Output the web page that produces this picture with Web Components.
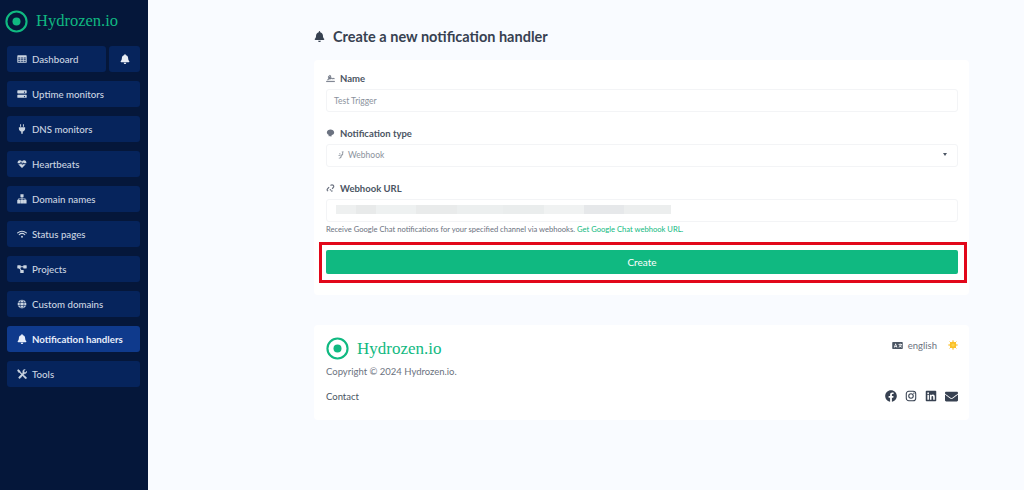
<!DOCTYPE html>
<html lang="en">
<head>
<meta charset="utf-8">
<title>Hydrozen.io</title>
<style>
    html, body { margin: 0; height: 100%; }
    body { font-family: Lato, "Noto Sans", sans-serif; background: #f9fbff; }
</style>
</head>
<body>
<hz-app>
    <hz-sidebar slot="sidebar">
        <hz-nav-row>
            <hz-nav-item icon="table" grow>Dashboard</hz-nav-item>
            <hz-nav-item icon="bell" square></hz-nav-item>
        </hz-nav-row>
        <hz-nav-item icon="server">Uptime monitors</hz-nav-item>
        <hz-nav-item icon="plug">DNS monitors</hz-nav-item>
        <hz-nav-item icon="heartbeat">Heartbeats</hz-nav-item>
        <hz-nav-item icon="sitemap">Domain names</hz-nav-item>
        <hz-nav-item icon="wifi">Status pages</hz-nav-item>
        <hz-nav-item icon="project">Projects</hz-nav-item>
        <hz-nav-item icon="globe">Custom domains</hz-nav-item>
        <hz-nav-item icon="bell" active>Notification handlers</hz-nav-item>
        <hz-nav-item icon="tools">Tools</hz-nav-item>
    </hz-sidebar>

    <hz-heading>Create a new notification handler</hz-heading>

    <hz-card class="form">
        <hz-field label="Name" icon="signature">
            <hz-input placeholder="Test Trigger"></hz-input>
        </hz-field>
        <hz-field label="Notification type" icon="blob">
            <hz-input placeholder="Webhook" icon="hook" select></hz-input>
        </hz-field>
        <hz-field label="Webhook URL" icon="link">
            <hz-input redacted></hz-input>
            <hz-hint slot="hint">Receive Google Chat notifications for your specified channel via webhooks. <a>Get Google Chat webhook URL.</a></hz-hint>
        </hz-field>
        <hz-button>Create</hz-button>
    </hz-card>

    <hz-footer></hz-footer>
</hz-app>

<script>
const ICONS = {
    bell: ['0 0 448 512', '<path d="M224 512c35.32 0 63.97-28.65 63.97-64H160.03c0 35.35 28.65 64 63.97 64zm215.39-149.71c-19.32-20.76-55.47-51.99-55.47-154.29 0-77.7-54.48-139.9-127.94-155.16V32c0-17.67-14.32-32-31.98-32s-31.98 14.33-31.98 32v20.84C118.56 68.1 64.08 130.3 64.08 208c0 102.3-36.15 133.53-55.47 154.29-6 6.45-8.66 14.16-8.61 21.71.11 16.4 12.98 32 32.1 32h383.8c19.12 0 32-15.6 32.1-32 .05-7.55-2.61-15.27-8.61-21.71z"/>'],
    table: ['0 0 16 16', '<path fill-rule="evenodd" d="M1.5 2h13a1 1 0 0 1 1 1v10a1 1 0 0 1-1 1h-13a1 1 0 0 1-1-1V3a1 1 0 0 1 1-1zM2 5.5v1.6h3.4V5.5zm4.6 0v1.6h2.8V5.5zm4 0v1.6H14V5.5zM2 8.3v1.6h3.4V8.3zm4.6 0v1.6h2.8V8.3zm4 0v1.6H14V8.3zM2 11.1v1.4h3.4v-1.4zm4.6 0v1.4h2.8v-1.4zm4 0v1.4H14v-1.4z"/>'],
    server: ['0 0 16 16', '<path fill-rule="evenodd" d="M1.5 2h13a1 1 0 0 1 1 1v3a1 1 0 0 1-1 1h-13a1 1 0 0 1-1-1V3a1 1 0 0 1 1-1zm10.500 2a1 1 0 1 0 0 2 1 1 0 0 0 0-2zM1.500 9h13a1 1 0 0 1 1 1v3a1 1 0 0 1-1 1h-13a1 1 0 0 1-1-1v-3a1 1 0 0 1 1-1zm10.500 2a1 1 0 1 0 0 2 1 1 0 0 0 0-2z"/>'],
    plug: ['0 0 16 16', '<path d="M5 .5h1.500v4H5zM9.500.5H11v4H9.500zM3 5h10v2.500c0 2.500-1.700 4-3.800 4.400V15.500H6.800v-3.600C4.700 11.500 3 10 3 7.500z"/>'],
    heartbeat: ['0 0 16 16', '<path d="M8 14.500 2 8.300h3.400l1-1.900 1.900 3.600 1.300-2.300.4.600H14zM1.100 6.900C.3 4.200 2 1.800 4.500 1.800c1.400 0 2.600.7 3.500 2 .9-1.300 2.100-2 3.500-2 2.500 0 4.200 2.400 3.400 5.100h-4l-1.200-1.700-1.300 2.400-2-3.700-1.700 3z"/>'],
    sitemap: ['0 0 16 16', '<path d="M5.500.5h5v4.500H8.600v2h5v2.300h1.700V15h-4.800V9.300h1.700V8.100H8.600v1.200h1.800V15H5.600V9.300h1.800V8.100H3.500v1.200h1.700V15H.4V9.300h1.700V7h5.300V5H5.500z"/>'],
    wifi: ['0 0 16 16', '<g fill="none" stroke="currentColor" stroke-width="1.700" stroke-linecap="round"><path d="M1 6.300c4-3.700 10-3.700 14 0"/><path d="M3.500 9c2.600-2.300 6.400-2.300 9 0"/></g><circle cx="8" cy="12.300" r="1.500"/>'],
    project: ['0 0 16 16', '<rect x=".5" y="2" width="5.500" height="5" rx=".7"/><rect x="10" y="2" width="5.500" height="5" rx=".7"/><rect x="5.200" y="9.500" width="5.500" height="5" rx=".7"/><path d="M5 3.600h6V5.200H5zM3 6.500h1.800l3.500 4.500H6.400z"/>'],
    globe: ['0 0 16 16', '<circle cx="8" cy="8" r="7"/><g fill="none" stroke="#06245c" stroke-width=".9"><path d="M1 5.600h14M1 10.400h14"/><ellipse cx="8" cy="8" rx="3.200" ry="7"/></g>'],
    tools: ['0 0 16 16', '<g stroke="currentColor" stroke-width=".8" stroke-linejoin="round"><path d="M1.800.8 5 3.200v1.300l3.200 3.200-1 1L4 5.500H2.700L.6 2.100zM11.800.7a3.700 3.700 0 0 1 1.300.1l-2.200 2.300.5 2 2 .5 2.300-2.200c.5 2.300-1.500 4.700-4.100 4.300L5 14.900c-1.300 1.100-3.100-.7-2-2l6.300-6.600C8.800 3.300 9.900 1 11.800.7zM10 9.300l4.800 4c.9 1 .2 1.800-.2 2-.5.300-1.100.3-1.700-.2l-4-4.800z"/></g>'],
    signature: ['0 0 16 16', '<g stroke="currentColor" stroke-width=".5"><path d="M.5 12.500h15v1.200H.5zM7 2.300c1.300 0 1.900 1.100 1.600 2.700l-.4 2.200c.8-.6 1.500-.9 2-.3.300.4.200.9.500 1 .5.100 1-.5 1.800-.6.900-.1 1.500.5 2.500.5v1.200c-1.200 0-1.800-.6-2.500-.5-.8.100-1.200.8-2 .6-.8-.2-.7-.9-1-1.200-.3-.2-1.300.7-2.500 1.900l-1-.5.300-1.400c-1 .5-1.800 1.800-2.700 3.300l-1.100-.6c.9-1.500 1.600-2.600 2.500-3.500L4 6.800c-.5-2.300 1.200-4.500 3-4.500zm0 1.200c-.9 0-2 1.400-1.800 2.700.7-.4 1.500-.9 2.100-1.200.2-.9 0-1.500-.3-1.500z"/></g>'],
    blob: ['0 0 16 16', '<path d="M8 1c3.300 0 6.500 1.900 6.500 5.200 0 2.600-2 4-4.300 4.300l-.4 2.100c0 .6-.5 1-1 1-.4 0-.7-.2-.9-.6L6.900 12 6 13c-.500.500-1.300.200-1.300-.6v-2.200C2.800 9.500 1.500 8 1.500 6.200 1.500 2.900 4.700 1 8 1z"/>'],
    link: ['0 0 16 16', '<g fill="none" stroke="currentColor" stroke-width="2.200"><path d="M8 2.800l1.500-1c1.200-.7 2.300-.4 3.200.5s1.300 2 .6 3.200L11 8.500"/><path d="M5.500 5.500 2.700 8.600c-.8 1-.8 2.200 0 3.100l1 1"/></g><rect x="6.600" y="9.200" width="2.400" height="2.400" transform="rotate(45 7.800 10.400)"/><rect x="9.200" y="11.200" width="2.400" height="2.400" transform="rotate(45 10.400 12.400)"/>'],
    hook: ['0 0 16 16', '<path d="M9.500.8h3.800v1.600h-1v3.900c0 1.900-1.500 2.800-3 2.800v1.600c0 2.800-1.900 4.500-4.300 4.500H3.600v-1.700H5c1.300 0 2.100-1.100 2.100-2.800V7.400h1.400c.8 0 2-.3 2-1.300V2.400h-1zM4 5h3v1.500H4zM3 8h3v1.500H3z"/>'],
    language: ['0 0 24 16', '<path fill-rule="evenodd" d="M2 .5h20A1.500 1.500 0 0 1 23.500 2v12a1.500 1.500 0 0 1-1.500 1.500H2A1.500 1.500 0 0 1 .5 14V2A1.500 1.500 0 0 1 2 .5zm5.500 3L4 12.500h1.800l.6-1.700h3l.6 1.700h1.800L8.300 3.500zm.400 2.800.900 3H7zM17 3.500h1.600v1.300h3.400v1.400h-.9c-.4 1.500-1.100 2.800-2 3.700.7.500 1.600.9 2.600 1.100l-.5 1.400c-1.300-.3-2.300-.9-3.200-1.600-.9.700-2 1.200-3.300 1.600l-.5-1.400c1.100-.3 2-.7 2.800-1.300-.5-.7-1-1.400-1.300-2.200h1.500c.2.500.500.900.8 1.300.6-.7 1.100-1.600 1.400-2.600h-5.300V4.800H17z"/>'],
    sun: ['0 0 16 16', '<g stroke="currentColor" stroke-width="1.600" stroke-linecap="round"><path d="M8 1v14M1 8h14M3 3l10 10M13 3 3 13"/></g><circle cx="8" cy="8" r="5.200"/><circle cx="8" cy="8" r="2.600" fill="#fcd34d"/>'],
    facebook: ['0 0 512 512', '<path d="M504 256C504 119 393 8 256 8S8 119 8 256c0 123.780 90.690 226.380 209.250 245V327.690h-63V256h63v-54.640c0-62.150 37-96.480 93.670-96.480 27.140 0 55.520 4.840 55.520 4.840v61h-31.280c-30.800 0-40.410 19.120-40.410 38.730V256h68.780l-11 71.690h-57.780V501C413.310 482.380 504 379.780 504 256z"/>'],
    instagram: ['0 0 16 16', '<g fill="none" stroke="currentColor"><rect x="1.700" y="1.700" width="12.600" height="12.600" rx="3.400" stroke-width="1.400"/><circle cx="8" cy="8" r="3" stroke-width="1.400"/></g><circle cx="11.800" cy="4.200" r=".9"/>'],
    linkedin: ['0 0 448 512', '<path d="M416 32H31.900C14.300 32 0 46.500 0 64.300v383.400C0 465.500 14.300 480 31.900 480H416c17.600 0 32-14.500 32-32.300V64.300c0-17.800-14.400-32.300-32-32.300zM135.400 416H69V202.200h66.500V416zm-33.200-243c-21.300 0-38.500-17.300-38.500-38.500S80.900 96 102.200 96c21.200 0 38.500 17.300 38.500 38.500 0 21.300-17.200 38.500-38.500 38.500zm282.100 243h-66.400V312c0-24.800-.5-56.700-34.500-56.700-34.600 0-39.900 27-39.900 54.900V416h-66.400V202.200h63.700v29.200h.9c8.900-16.800 30.600-34.500 62.900-34.500 67.200 0 79.700 44.300 79.700 101.900V416z"/>'],
    envelope: ['0 0 512 512', '<path d="M502.300 190.800c3.900-3.100 9.700-.2 9.700 4.700V400c0 26.500-21.500 48-48 48H48c-26.500 0-48-21.500-48-48V195.600c0-5 5.700-7.800 9.700-4.700 22.400 17.400 52.100 39.500 154.100 113.600 21.100 15.400 56.700 47.800 92.200 47.600 35.700.3 72-32.800 92.300-47.600 102-74.100 131.600-96.300 154-113.700zM256 320c23.200.4 56.600-29.200 73.400-41.400 132.700-96.300 142.800-104.700 173.400-128.700 5.800-4.500 9.200-11.500 9.200-18.900v-19c0-26.500-21.500-48-48-48H48C21.500 64 0 85.500 0 112v19c0 7.400 3.400 14.300 9.200 18.900 30.600 23.900 40.700 32.400 173.400 128.700 16.800 12.200 50.200 41.800 73.400 41.400z"/>']
};

class HzElement extends HTMLElement {

    static template() {
        return ``;
    }

    constructor() {
        super();
        this.attachShadow({ mode: 'open' });
        this.root = this.shadowRoot;
        this.root.innerHTML = this.constructor.template(this);
    }

}

class HzIcon extends HzElement {

    static template(attr) {
        const [box, body] = ICONS[attr.getAttribute('name')] || ICONS.bell;
        return `
            <style>
                :host { display: inline-flex; width: var(--icon-size, 11px); height: var(--icon-size, 11px); flex: none; }
                svg { width: 100%; height: 100%; fill: currentColor; }
            </style>
            <svg viewBox="${box}" aria-hidden="true">${body}</svg>
        `;
    }
}

class HzLogo extends HzElement {

    static template() {
        return `
            <style>
                :host { display: flex; align-items: center; gap: 8px; color: #10b981; }
                svg { width: 23px; height: 23px; flex: none; }
                span { font: 400 var(--logo-size, 16.500px)/1 "Liberation Serif", "Times New Roman", serif; }
            </style>
            <svg viewBox="0 0 24 24" fill="none">
                <circle cx="12" cy="12" r="10.500" stroke="currentColor" stroke-width="2.200"/>
                <circle cx="12" cy="12" r="4.200" fill="currentColor"/>
            </svg>
            <span>Hydrozen.io</span>
        `;
    }
}

class HzApp extends HzElement {

    static template() {
        return `
            <style>
                :host { display: grid; grid-template-columns: 148px 1fr; min-height: 490px; }
                main { padding: 0 55px 0 166px; display: flex; flex-direction: column; min-width: 0; }
            </style>
            <slot name="sidebar"></slot>
            <main><slot></slot></main>
        `;
    }
}

class HzSidebar extends HzElement {

    static template() {
        return `
            <style>
                :host { display: block; background: #05173a; height: 490px; box-sizing: border-box; padding: 10px 8px 0 7px; }
                hz-logo { margin: 0 0 13px -2px; }
                nav { display: flex; flex-direction: column; gap: 9px; }
            </style>
            <hz-logo></hz-logo>
            <nav><slot></slot></nav>
        `;
    }
}

class HzNavRow extends HzElement {

    static template() {
        return `
            <style>
                :host { display: flex; gap: 3px; }
            </style>
            <slot></slot>
        `;
    }
}

class HzNavItem extends HzElement {

    static template(attr) {
        return `
            <style>
                :host {
                    display: flex; align-items: center; gap: 5px; height: 26px; box-sizing: border-box;
                    padding: 0 10px 1px; border-radius: 3px; background: #06245c; color: #cbd5e1;
                    font-size: 9.700px; font-weight: 500; white-space: nowrap; --icon-size: 10px;
                }
                :host([grow]) { flex: 1; }
                :host([square]) { width: 31px; padding: 0; justify-content: center; color: #e8edf5; }
                :host([active]) { background: #0f3a8c; color: #e8eefb; font-weight: 700; }
            </style>
            <hz-icon name="${attr.getAttribute('icon')}"></hz-icon>
            <slot></slot>
        `;
    }
}

class HzHeading extends HzElement {

    static template() {
        return `
            <style>
                :host {
                    display: flex; align-items: center; gap: 8px; height: 60px; box-sizing: border-box; padding-top: 13px;
                    color: #374151; font-size: 14.500px; font-weight: 700; --icon-size: 11px;
                }
            </style>
            <hz-icon name="bell"></hz-icon>
            <span><slot></slot></span>
        `;
    }
}

class HzCard extends HzElement {

    static template() {
        return `
            <style>
                :host { display: block; background: #fff; border-radius: 4px; padding: 12px 11px 21px 12px; }
            </style>
            <slot></slot>
        `;
    }
}

class HzField extends HzElement {

    static template(attr) {
        return `
            <style>
                :host { display: block; margin-bottom: 15px; }
                label {
                    display: flex; align-items: center; gap: 5px; height: 12px; margin-bottom: 5px;
                    color: #4b5563; font-size: 9.500px; font-weight: 700; --icon-size: 9px;
                }
                hz-icon { color: #6b7280; }
            </style>
            <label><hz-icon name="${attr.getAttribute('icon')}"></hz-icon>${attr.getAttribute('label')}</label>
            <slot></slot>
            <slot name="hint"></slot>
        `;
    }
}

class HzInput extends HzElement {

    static template(attr) {
        const icon = attr.getAttribute('icon');
        const text = attr.getAttribute('placeholder') || '';
        return `
            <style>
                :host {
                    display: flex; align-items: center; gap: 3px; height: 23px; box-sizing: border-box;
                    padding: 0 7px; background: #fff; border: 1px solid #f3f4f6; border-radius: 3px;
                    color: #8b929d; font-size: 8.500px; --icon-size: 8px;
                }
                :host([select]) { padding: 0 7px 2px 10px; }
                .text { flex: 1; }
                .caret { width: 0; height: 0; border: 2.500px solid transparent; border-top: 3.500px solid #4b5563; border-bottom: 0; margin-right: 3px; }
                .smear {
                    width: 335px; height: 9px; margin: 0 0 2px 2px;
                    background: linear-gradient(90deg, #eef0f0 0 6%, #e8eaea 6% 12%, #eef1f1 12% 24%, #e9ebeb 24% 36%, #ecefef 36% 50%, #eaeded 50% 62%, #f0f2f2 62% 74%, #e6e8ea 74% 86%, #eceeee 86% 100%);
                }
            </style>
            ${attr.hasAttribute('redacted') ? '<div class="smear"></div>' : ''}
            ${icon ? `<hz-icon name="${icon}"></hz-icon>` : ''}
            ${text ? `<span class="text">${text}</span>` : ''}
            ${attr.hasAttribute('select') ? '<span class="caret"></span>' : ''}
        `;
    }
}

class HzHint extends HzElement {

    static template() {
        return `
            <style>
                :host { display: block; margin-top: 1px; color: #6b7280; font-size: 7.600px; line-height: 12px; }
                ::slotted(a) { color: #10b981; }
            </style>
            <slot></slot>
        `;
    }
}

class HzButton extends HzElement {

    static template() {
        return `
            <style>
                :host { display: block; position: relative; }
                button {
                    display: block; width: 100%; height: 24px; border: 0; border-radius: 2px; padding: 0;
                    background: #10b981; color: #fff; font: 400 10px Lato, sans-serif;
                }
                .callout { position: absolute; inset: -8px -9px -9px -7px; border: 3px solid #e2071a; pointer-events: none; }
            </style>
            <button><slot></slot></button>
            <div class="callout"></div>
        `;
    }
}

class HzFooter extends HzElement {

    static template() {
        return `
            <style>
                :host {
                    display: block; margin-top: 30px; height: 95px; box-sizing: border-box; padding: 12px 11px 0 12px;
                    background: #fff; border-radius: 4px; color: #6b7280; font-size: 9.500px;
                }
                .row { display: flex; justify-content: space-between; align-items: center; }
                .lang { display: flex; align-items: center; gap: 5px; margin-top: -7px; color: #6b7280; }
                .lang hz-icon { --icon-size: 11px; color: #4b5563; }
                .lang hz-icon.sun { --icon-size: 10px; color: #fbbf24; margin-left: 6px; }
                .copy { margin: 5px 0 12px; line-height: 13px; }
                .contact { color: #4b5563; }
                .social { display: flex; gap: 8px; color: #374151; --icon-size: 12px; }
                .social .mail { --icon-size: 13px; }
                hz-logo { --logo-size: 17px; }
            </style>
            <div class="row"><hz-logo></hz-logo>
                <div class="lang"><hz-icon name="language"></hz-icon>english<hz-icon class="sun" name="sun"></hz-icon></div>
            </div>
            <div class="copy">Copyright © 2024 Hydrozen.io.</div>
            <div class="row">
                <span class="contact">Contact</span>
                <div class="social">
                    <hz-icon name="facebook"></hz-icon>
                    <hz-icon name="instagram"></hz-icon>
                    <hz-icon name="linkedin"></hz-icon>
                    <hz-icon class="mail" name="envelope"></hz-icon>
                </div>
            </div>
        `;
    }
}

customElements.define('hz-icon', HzIcon);
customElements.define('hz-logo', HzLogo);
customElements.define('hz-app', HzApp);
customElements.define('hz-sidebar', HzSidebar);
customElements.define('hz-nav-row', HzNavRow);
customElements.define('hz-nav-item', HzNavItem);
customElements.define('hz-heading', HzHeading);
customElements.define('hz-card', HzCard);
customElements.define('hz-field', HzField);
customElements.define('hz-input', HzInput);
customElements.define('hz-hint', HzHint);
customElements.define('hz-button', HzButton);
customElements.define('hz-footer', HzFooter);
</script>
</body>
</html>
